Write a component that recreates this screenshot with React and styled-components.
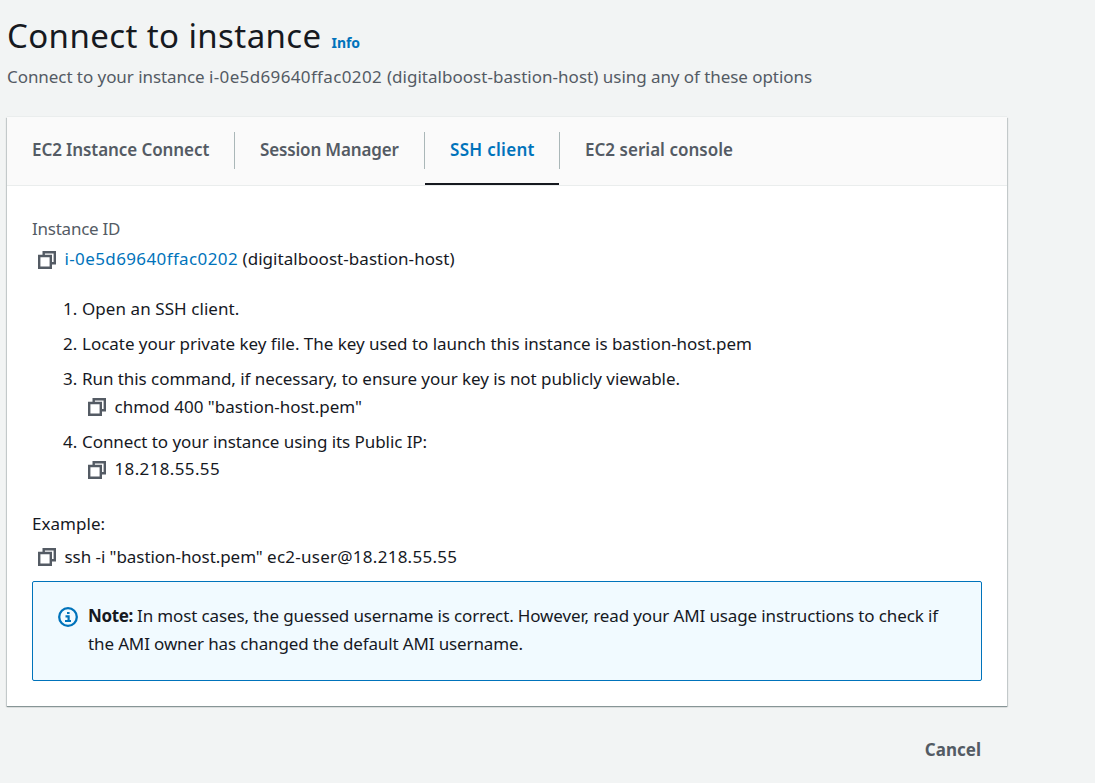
import React from 'react';
import styled, { createGlobalStyle } from 'styled-components';

const GlobalStyle = createGlobalStyle`
  * { box-sizing: border-box; }
  body {
    margin: 0;
    background: #f2f4f4;
    color: #16191f;
    font-family: 'Noto Sans', 'Open Sans', sans-serif;
    font-size: 17px;
    line-height: 28px;
  }
`;

const Page = styled.main`
  width: 1095px;
  height: 783px;
  padding: 9px 88px 0 7px;
  overflow: hidden;
`;

const TitleRow = styled.header`
  display: flex;
  align-items: baseline;
  gap: 10px;
  height: 54px;
`;

const Title = styled.h1`
  margin: 0;
  font-size: 33px;
  font-weight: 400;
  line-height: 54px;
  letter-spacing: 0.4px;
  white-space: nowrap;
`;

const InfoLink = styled.a`
  color: #0073bb;
  font-size: 14px;
  font-weight: 700;
  letter-spacing: -0.1px;
`;

const Text = styled.span`
  white-space: nowrap;
  letter-spacing: ${(p) => p.$track || 0}px;
`;

const Subtitle = styled.p`
  margin: 0 0 26px;
  color: #545b64;
  white-space: nowrap;
`;

const Card = styled.section`
  width: 1000px;
  height: 589px;
  background: #fff;
  box-shadow: 0 1px 0 0 #879596, 0 -1px 0 0 #eaeded, 0 1px 1px 0 rgba(0, 28, 36, 0.3),
    1px 1px 1px 0 rgba(0, 28, 36, 0.15), -1px 1px 1px 0 rgba(0, 28, 36, 0.15);
`;

const Tabs = styled.nav`
  display: flex;
  height: 69px;
  background: #fafafa;
  border-bottom: 1px solid #eaeded;
`;

const Tab = styled.div`
  display: flex;
  align-items: center;
  width: ${(p) => p.$width}px;
  padding: 0 0 ${(p) => (p.$active ? 0 : 2)}px 25px;
  color: ${(p) => (p.$active ? '#0073bb' : '#545b64')};
  font-weight: 600;
  border-bottom: ${(p) => (p.$active ? '2px solid #16191f' : 'none')};
`;

const Divider = styled.i`
  width: 1px;
  height: 37px;
  margin-top: 15px;
  background: #aab7b8;
`;

const Body = styled.div`
  padding: 29px 25px 0;
`;

const Label = styled.div`
  color: #545b64;
  margin-bottom: 2px;
  letter-spacing: -0.24px;
`;

const CopyRow = styled.div`
  display: flex;
  align-items: center;
  height: ${(p) => p.$height || 28}px;
  line-height: ${(p) => p.$height || 28}px;
  padding-left: 6px;
`;

const CopySvg = styled.svg`
  flex: none;
  width: 18px;
  height: 18px;
  margin: ${(p) => (p.$low ? 2 : 0)}px 8.5px 0 0;
  fill: none;
  stroke: #545b64;
  stroke-width: 2.4;
`;

const InstanceLink = styled.a`
  color: #0073bb;
  margin-right: 4.5px;
  letter-spacing: 0.38px;
`;

const Steps = styled.ol`
  list-style: none;
  margin: 22px 0 28px;
  padding: 0 0 0 31px;
`;

const Step = styled.li`
  display: grid;
  grid-template-columns: 19px 1fr;
  & + & { margin-top: 7px; }
`;

const Example = styled.div`
  margin-bottom: 5px;
  letter-spacing: 0.03px;
`;

const Note = styled.aside`
  display: flex;
  height: 100px;
  margin-top: 10px;
  padding: 20px 25px;
  border: 1px solid #0073bb;
  border-radius: 2px;
  background: #f1faff;
`;

const InfoSvg = styled.svg`
  flex: none;
  width: 20px;
  height: 20px;
  margin: 5px 10px 0 0;
`;

const NoteLine = styled.div`
  display: flex;
  gap: 4px;
`;

const Strong = styled.strong`
  font-weight: 700;
  letter-spacing: -0.35px;
`;

const Actions = styled.footer`
  display: flex;
  justify-content: flex-end;
  padding: 30px 26px 0 0;
`;

const CancelButton = styled.button`
  border: 0;
  padding: 0;
  background: none;
  color: #545b64;
  font: inherit;
  font-weight: 700;
  letter-spacing: 0;
`;

const CopyIcon = ({ low }) => (
  <CopySvg viewBox="0 0 18 18" $low={low}>
    <path d="M5.7 4.5V1.2h11.1v11.1h-3.3" />
    <path d="M1.2 5h11.6v11.8H1.2z" />
  </CopySvg>
);

const InfoIcon = () => (
  <InfoSvg viewBox="0 0 20 20" fill="none" stroke="#0073bb">
    <circle cx="10" cy="10" r="8.8" strokeWidth="2.3" />
    <path d="M9 6h2.6M7.5 9.3h3.1v4.2M7 14h6" strokeWidth="2.2" />
  </InfoSvg>
);

const steps = [
  { text: 'Open an SSH client.', track: 0.07 },
  {
    text: 'Locate your private key file. The key used to launch this instance is bastion-host.pem',
    track: -0.03,
  },
  {
    text: 'Run this command, if necessary, to ensure your key is not publicly viewable.',
    track: -0.06,
    copy: 'chmod 400 "bastion-host.pem"',
    copyTrack: 0,
    height: 28,
  },
  {
    text: 'Connect to your instance using its Public IP:',
    track: -0.07,
    copy: '18.218.55.55',
    copyTrack: 0.36,
    height: 26,
    low: true,
  },
];

export default function App() {
  return (
    <Page>
      <GlobalStyle />
      <TitleRow>
        <Title>Connect to instance</Title>
        <InfoLink>Info</InfoLink>
      </TitleRow>
      <Subtitle>
        <Text $track={-0.06}>Connect to your instance </Text>
        <Text $track={0.36}>i-0e5d69640ffac0202 </Text>
        <Text $track={0.03}>(digitalboost-bastion-host) </Text>
        <Text $track={-0.06}>using any of these options</Text>
      </Subtitle>
      <Card>
        <Tabs>
          <Tab $width={227}><Text $track={-0.09}>EC2 Instance Connect</Text></Tab>
          <Divider />
          <Tab $width={189}><Text $track={-0.16}>Session Manager</Text></Tab>
          <Divider />
          <Tab $width={134} $active><Text $track={0.3}>SSH client</Text></Tab>
          <Divider />
          <Tab $width={200}><Text $track={0.02}>EC2 serial console</Text></Tab>
        </Tabs>
        <Body>
          <Label>Instance ID</Label>
          <CopyRow>
            <CopyIcon low />
            <InstanceLink>i-0e5d69640ffac0202</InstanceLink>
            <Text $track={0.05}>(digitalboost-bastion-host)</Text>
          </CopyRow>
          <Steps>
            {steps.map((step, i) => (
              <Step key={step.text}>
                <span>{i + 1}.</span>
                <div>
                  <Text $track={step.track}>{step.text}</Text>
                  {step.copy && (
                    <CopyRow $height={step.height}>
                      <CopyIcon low={step.low} />
                      <Text $track={step.copyTrack}>{step.copy}</Text>
                    </CopyRow>
                  )}
                </div>
              </Step>
            ))}
          </Steps>
          <Example>Example:</Example>
          <CopyRow>
            <CopyIcon />
            <span>
              <Text $track={-0.06}>ssh -i "bastion-host.pem" </Text>
              <Text $track={0.26}>ec2-user@18.218.55.55</Text>
            </span>
          </CopyRow>
          <Note>
            <InfoIcon />
            <div>
              <NoteLine>
                <Strong>Note:</Strong>
                <Text $track={-0.133}>
                  In most cases, the guessed username is correct. However, read your AMI usage instructions to check if
                </Text>
              </NoteLine>
              <NoteLine>
                <Text $track={-0.13}>the AMI owner has changed the default AMI username.</Text>
              </NoteLine>
            </div>
          </Note>
        </Body>
      </Card>
      <Actions>
        <CancelButton>Cancel</CancelButton>
      </Actions>
    </Page>
  );
}
